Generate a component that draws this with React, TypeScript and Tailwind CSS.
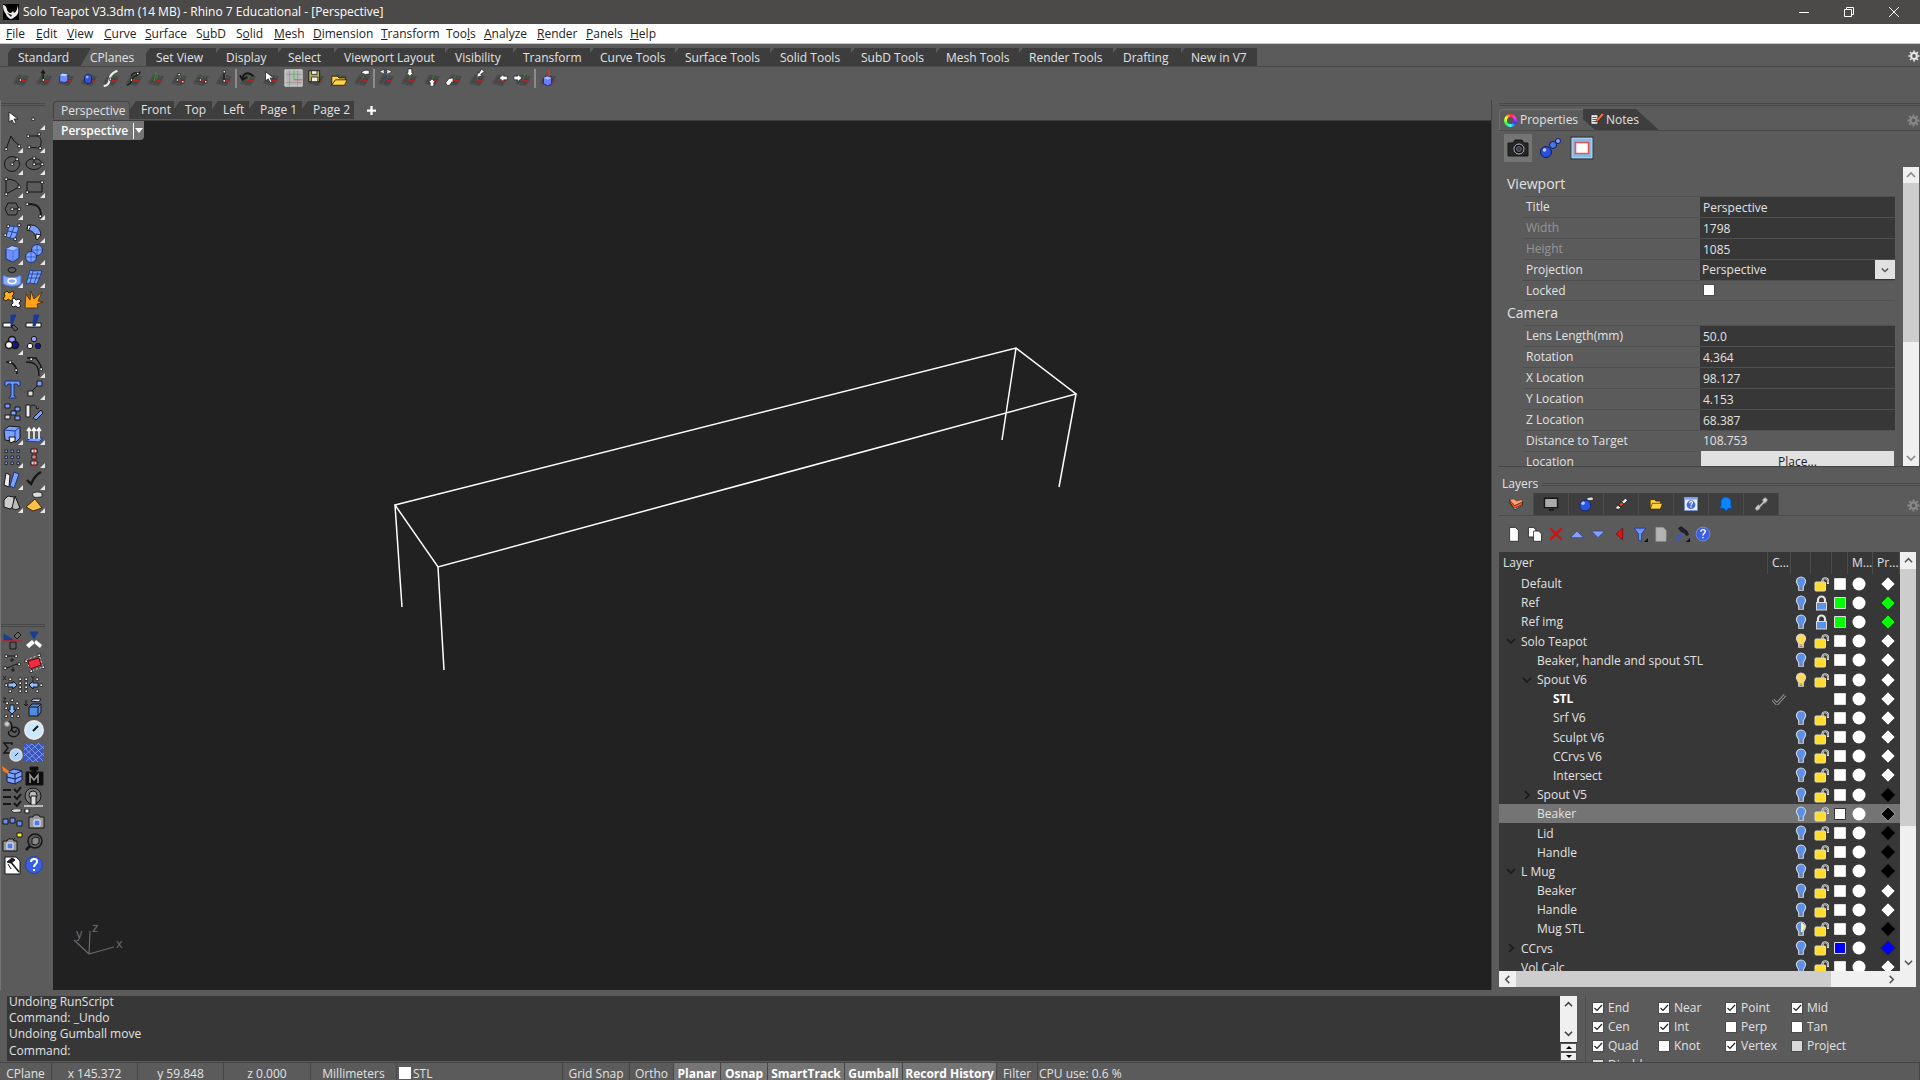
import React, { useState } from 'react'

type IconProps = { children: React.ReactNode; size?: string; box?: string }

function Icon({ children, size = 'size-[22px]', box = '0 0 22 22' }: IconProps) {
  return (
    <svg viewBox={box} className={`${size} shrink-0`} fill="none" stroke="#161616" aria-hidden="true">
      {children}
    </svg>
  )
}

// little square control points
function Pts({ at, fill = '#fff' }: { at: number[][]; fill?: string }) {
  return (
    <>
      {at.map(([x, y], i) => (
        <rect key={i} x={x - 1} y={y - 1} width="2.4" height="2.4" fill={fill} stroke="#111" strokeWidth=".7" />
      ))}
    </>
  )
}

// dim construction plane with the red x axis and green y axis
function Plane() {
  return (
    <>
      <path d="M2 17 8 7 20 9 14 20Z" fill="#4e4e4e" stroke="none" />
      <path d="M4 14 16 17M6 11 18 13M5 18 11 8M9 19 15 8M12 19 18 9" stroke="#404040" strokeWidth=".7" />
      <path d="M11 13 18 15" stroke="#d01818" strokeWidth="1.3" />
      <path d="M11 13 13 8" stroke="#2a8a2a" strokeWidth="1" />
    </>
  )
}

const Corner = () => <path d="M22 17v5h-5z" fill="#e6e6e6" stroke="none" />

function Chevron({ dir = 'down', className = 'size-[10px]' }: { dir?: 'up' | 'down' | 'left' | 'right'; className?: string }) {
  const d = { up: 'M1 7l4-4 4 4', down: 'M1 3l4 4 4-4', left: 'M7 1 3 5l4 4', right: 'M3 1l4 4-4 4' }[dir]
  return (
    <svg viewBox="0 0 10 10" className={className} fill="none" stroke="currentColor" strokeWidth="1.7" aria-hidden="true">
      <path d={d} />
    </svg>
  )
}

function Gear({ className }: { className: string }) {
  return (
    <svg viewBox="0 0 14 14" className={className} fill="none" stroke="currentColor" aria-hidden="true">
      <circle cx="7" cy="7" r="3.4" strokeWidth="2.4" />
      <path d="M7 .5v2M7 11.5v2M.5 7h2M11.5 7h2M2.4 2.4l1.4 1.4M10.2 10.2l1.4 1.4M2.4 11.6l1.4-1.4M10.2 3.8l1.4-1.4" strokeWidth="2" />
    </svg>
  )
}

const menus: [string, number, string][] = [
  ['File', 0, 'w-[30px]'], ['Edit', 0, 'w-[31px]'], ['View', 0, 'w-[37px]'], ['Curve', 0, 'w-[41px]'],
  ['Surface', 0, 'w-[51px]'], ['SubD', 1, 'w-[40px]'], ['Solid', 1, 'w-[38px]'], ['Mesh', 0, 'w-[39px]'],
  ['Dimension', 0, 'w-[68px]'], ['Transform', 0, 'w-[65px]'], ['Tools', 3, 'w-[38px]'], ['Analyze', 0, 'w-[53px]'],
  ['Render', 0, 'w-[49px]'], ['Panels', 0, 'w-[44px]'], ['Help', 0, 'w-[30px]'],
]

const toolTabs: [string, string][] = [
  ['Standard', 'w-[72px]'], ['CPlanes', 'w-[66px]'], ['Set View', 'w-[70px]'], ['Display', 'w-[62px]'],
  ['Select', 'w-[56px]'], ['Viewport Layout', 'w-[111px]'], ['Visibility', 'w-[68px]'], ['Transform', 'w-[77px]'],
  ['Curve Tools', 'w-[85px]'], ['Surface Tools', 'w-[95px]'], ['Solid Tools', 'w-[81px]'], ['SubD Tools', 'w-[85px]'],
  ['Mesh Tools', 'w-[83px]'], ['Render Tools', 'w-[94px]'], ['Drafting', 'w-[68px]'], ['New in V7', 'w-[76px]'],
]

const viewTabs: [string, string][] = [
  ['Perspective', 'w-[77px]'], ['Front', 'w-[44px]'], ['Top', 'w-[38px]'], ['Left', 'w-[37px]'],
  ['Page 1', 'w-[53px]'], ['Page 2', 'w-[52px]'],
]

type Tool = [string, React.ReactNode]

const cplaneTools: Tool[][] = [
  [
    ['Origin', <Pts at={[[10, 13]]} />],
    ['Elevation', <><path d="M10 13V3M8 6l2-3 2 3" strokeWidth="1.5" /><Pts at={[[10, 13]]} /></>],
    ['To object', <><path d="M4 8l3-2 6 1v7l-3 2-6-1z" fill="#6d8fff" stroke="#1a2a90" /><path d="M4 8l3-2 6 1-3 2z" fill="#c3d1ff" stroke="none" /></>],
    ['To surface', <><ellipse cx="10" cy="12" rx="4" ry="5" fill="#3454d8" stroke="#10206a" /><circle cx="9" cy="10" r="1.6" fill="#8fb2ff" stroke="none" /></>],
    ['To curve', <><path d="M3 20C11 19 8 12 11 8s5-4 7-5" stroke="#eee" strokeWidth="2.4" /><Pts at={[[10, 12]]} /></>],
    ['Perp to curve', <><path d="M3 19c6-1 5-7 8-9s5-2 7-6M8 9c2-5 6-4 7-2" strokeWidth="1.4" /><Pts at={[[8, 13], [15, 6]]} /></>],
    ['Rotate', <path d="M9 14 11 4" stroke="#1f9d1f" />],
    ['3 points', <Pts at={[[9, 13], [15, 15], [11, 7]]} />],
    ['By X axis', <Pts at={[[10, 13], [16, 15]]} />],
    ['By Z axis', <><path d="M11 14V4" strokeWidth="1.4" /><Pts at={[[11, 14], [11, 4]]} /></>],
  ],
  [
    ['Previous', <path d="M5 11C6 5 12 4 17 9M2 8l3 5 5-3" strokeWidth="2" />],
    ['Select', <path d="M5 4v10l3-2 2 4 2-1-2-4h4z" fill="#fff" strokeWidth=".8" />],
    ['Named grid', <><path d="M1 2h19v18H1z" fill="#b9b9b9" stroke="#ddd" /><path d="M6 3v17M15 3v17M2 7h18M2 16h18" stroke="#8a8a8a" strokeWidth=".7" /><path d="M11 3v10" stroke="#3c3" /><path d="M11 13h9" stroke="#e44" /></>],
    ['Save', <><path d="M3 3h12v12H3z" fill="#b4a956" /><path d="M6 3h6v4H6zM6 10h7v5H6z" fill="#eee" strokeWidth=".8" /></>],
    ['Read', <path d="M3 19V9h6l2 2h7v2M3 19l4-6h13l-3 6z" fill="#ffd34d" stroke="#332200" />],
    ['Properties', <path d="M10 5c3-3 7-3 9-2v4c-2-1-4 1-5 0z" fill="#fff" strokeWidth=".8" />],
  ],
  [
    ['To view', <><path d="M4 4c4-3 10-3 13 0-3 3-9 3-13 0z" fill="#fff" strokeWidth=".7" /><circle cx="10.500" cy="4" r="1.600" fill="#3262e8" /><path d="M11 8v10" stroke="#1f40a0" /></>],
    ['Top', <path d="M10 1h4v4h2l-4 4-4-4h2z" fill="#fff" strokeWidth=".7" />],
    ['Bottom', <path d="M9 20v-4H7l4-4 4 4h-2v4z" fill="#fff" strokeWidth=".7" />],
    ['Front', <path d="M3 19l-1-3 4-5 1 1 1-1h2v5l-1-1-3 4z" fill="#fff" strokeWidth=".7" />],
    ['Back', <path d="M16 1l3 3-4 3 2 1-5 2-1-1 1-5 1 2z" fill="#fff" strokeWidth=".7" />],
    ['Right', <path d="M10 11l5-4v2h4v4h-4v2z" fill="#fff" strokeWidth=".7" />],
    ['Left', <path d="M10 11l-5 4v-2H1V9h4V7z" fill="#fff" strokeWidth=".7" />],
  ],
  [['Gumball', <><path d="M12 2v8" stroke="#d33" strokeWidth="1.600" /><path d="M6 11l4-2 5 2v6l-4 3-5-3z" fill="#6a7dff" stroke="#1a2470" /><path d="M6 11l4-2 5 2-4 2z" fill="#aab6ff" stroke="none" /></>]],
]

const cplaneGroups = ['w-[225px] grid-cols-10', 'w-[136px] grid-cols-6', 'w-[159px] grid-cols-7', 'w-[24px] grid-cols-1']

const blue = '#7ba0ff'

const mainTools: Tool[] = [
  ['Select', <path d="M8 4v10l3-2 2 4 2-1-2-4h4z" fill="#fff" strokeWidth=".8" />],
  ['Point', <><Pts at={[[10, 11]]} /><Corner /></>],
  ['Polyline', <><path d="M5 18 10 5l3 5 6 5" /><Pts at={[[5, 18], [18, 15]]} /><Corner /></>],
  ['Curve', <><path d="M5 5h9c6 0 5 13 0 12L6 16" /><Pts at={[[5, 5], [16, 3], [6, 16], [17, 17]]} /><Corner /></>],
  ['Circle', <><circle cx="11" cy="11" r="7.500" /><path d="M11 11l5-5" /><Pts at={[[11, 11], [16, 6]]} /><Corner /></>],
  ['Ellipse', <><ellipse cx="11" cy="11" rx="8" ry="5.500" /><path d="M11 11V6M11 11h7" /><Pts at={[[11, 11], [11, 5], [19, 11]]} /><Corner /></>],
  ['Arc', <><path d="M5 3v15l13-7M5 3c9 0 13 4 13 8" /><Pts at={[[5, 3], [5, 18], [18, 11]]} /><Corner /></>],
  ['Rectangle', <><path d="M4 6h15v10H4z" /><Pts at={[[4, 16], [19, 6]]} /><Corner /></>],
  ['Polygon', <><path d="M4 11l3-6h8l3 6-3 6H7zM11 11h7" /><Pts at={[[11, 11], [18, 11]]} /><Corner /></>],
  ['Fillet curves', <><path d="M5 6c9 0 13 3 13 12" strokeWidth="1.800" /><Pts at={[[4, 6], [17, 18]]} /><Corner /></>],
  ['Surface from points', <><path d="M8 5l10 1-4 12-9-2z" fill={blue} stroke="#24469c" /><path d="M7 10l9 2M13 6 9 17" stroke="#24469c" /><Pts at={[[7, 5], [18, 4], [4, 14], [14, 18]]} /><Corner /></>],
  ['Sweep', <><path d="M5 4c8-1 12 4 13 9l-5 5c0-5-4-9-9-9z" fill={blue} /><path d="M5 4l3 1-3 5-1-1zM13 13l5 1-4 5-1-1z" fill="#fff" /><Corner /></>],
  ['Box', <><path d="M5 6l6-3 7 2v10l-6 4-7-3z" fill="#6d92ff" stroke="#17307a" /><path d="M5 6l6-3 7 2-6 3z" fill="#a9c3ff" stroke="none" /><path d="M5 6l7 2v11M12 8l6-3" stroke="#4468cc" strokeWidth=".8" /><Corner /></>],
  ['Sphere', <><circle cx="14" cy="7" r="5.500" fill={blue} stroke="#17307a" /><circle cx="8" cy="14" r="5.500" fill={blue} stroke="#17307a" /><path d="M8 9v11M3 14h10M14 2v10M9 7h10" stroke="#2b4fae" strokeWidth=".7" /><Corner /></>],
  ['Surface tools', <><ellipse cx="11" cy="4" rx="4" ry="2.500" /><path d="M2 9c6 3 12 3 18 0v9c-6 3-12 3-18 0z" fill="#8aaaff" stroke="#4468cc" /><ellipse cx="11" cy="15" rx="4" ry="2.500" stroke="#fff" strokeWidth="1.500" /><Corner /></>],
  ['Mesh', <><path d="M7 4c4 2 8 0 12 1l-5 13c-4 0-7-2-11 0z" fill={blue} stroke="#1d3d8b" /><path d="M5 12h12M10 5 7 17M15 6 11 18M6 8h12" stroke="#1d3d8b" strokeWidth=".8" /><Corner /></>],
  ['Boolean', <><path d="M3 5l3-2 2 2 4-2 1 3-2 2 2 3-3 2-3-2-2 2-3-2 2-3z" fill="#ffae1a" stroke="#352200" /><path d="M11 11l2-1 2 2 3-1 2 2-2 2 2 3-3 2-2-2-3 1-2-2 2-2z" fill="#fff" /></>],
  ['Explode', <path d="M2 20 3 6l4 6 1-9 3 8 8-7-4 9 5 1-6 2 1 4z" fill="#ffa21a" stroke="#4a2800" strokeWidth=".8" />],
  ['Trim', <><path d="M2 12h9v4H2z" fill="#fff" /><path d="M10 4h5l-5 11z" fill="#1b3899" stroke="#1b3899" /><path d="M13 14l4 4-3 2-4-5z" /></>],
  ['Split', <><path d="M3 12h15v4H3z" fill="#fff" /><path d="M11 4h5l-4 11h-2z" fill="#1b3899" stroke="#1b3899" /></>],
  ['Group', <><circle cx="11" cy="7" r="3.500" fill="#9a9aff" strokeWidth="1.500" /><circle cx="14" cy="12" r="3.500" fill="#16168a" strokeWidth="1.500" /><circle cx="8" cy="12" r="3.500" fill="#fff" strokeWidth="1.500" /><Corner /></>],
  ['Ungroup', <><circle cx="11" cy="6" r="2.700" fill="#9a9aff" /><circle cx="15" cy="13" r="2.700" fill="#16168a" /><circle cx="7" cy="13" r="2.700" fill="#fff" /></>],
  ['Edit points', <><path d="M5 6c7 0 11 3 11 12" strokeWidth="1.700" /><Pts at={[[9, 6], [15, 14]]} /></>],
  ['Control points', <><path d="M3 6c9 0 13 3 13 14M4 2h9l5 8v4" strokeWidth="1.400" /><Pts at={[[8, 3], [18, 13]]} /><Corner /></>],
  ['Text', <path d="M4 3h15v5h-2l-1-2h-3v12l2 1v1H8v-1l2-1V6H7L6 8H4z" fill="#6d98ff" stroke="#14307c" />],
  ['Move', <><path d="M7 15l8-8" /><path d="M5 13h5v5H5z" fill="#ddd" /><path d="M14 3h5v5h-5z" fill={blue} /><Corner /></>],
  ['Copy', <><path d="M4 3h5v4H4zM14 6h5v4h-5zM10 10h5v4h-5zM14 15h5v4h-5z" fill={blue} /><path d="M4 14h5v4H4z" fill="#ddd" /></>],
  ['Rotate', <><path d="M3 4h4v12H3z" fill="#eee" /><path d="M10 17l8-8 2 3-7 7z" fill={blue} /><path d="M8 5c4-2 5 0 6 3l2-1" /></>],
  ['Fillet edges', <><path d="M3 7l5-4 11 1v11l-4 4-11-2z" fill={blue} /><path d="M3 7l11 1v8M14 8l5-4" stroke="#1e3e90" /><path d="M8 14h6v4l-5 2z" fill="#eee" /><Corner /></>],
  ['Extrude', <><path d="M3 18l5-3h12l-4 4z" fill={blue} stroke="#1e3e90" /><path d="M6 16V5M11 16V5M16 16V5M4 8l2-3 2 3M9 8l2-3 2 3M14 8l2-3 2 3" stroke="#fff" strokeWidth="1.500" /><Corner /></>],
  ['Array', <><Pts fill={blue} at={[[5, 5], [11, 5], [17, 5], [5, 11], [11, 11], [17, 11], [5, 17], [11, 17], [17, 17]]} /><Corner /></>],
  ['Align', <><path d="M8 3h6v4H8zM9 9h4v4H9zM8 15h6v4H8z" fill="#ddd" /><path d="M11 1v20" stroke="#e11" /><Corner /></>],
  ['Drape', <><path d="M5 5l4 2-1 12-5-2z" fill="#eee" /><path d="M13 4l5 2-5 14-4-2z" fill={blue} stroke="#16347c" /><Corner /></>],
  ['Check', <><path d="M4 12l4 4C11 9 14 6 18 4" strokeWidth="2.400" /><Corner /></>],
  ['Solids', <><path d="M3 9l4-4 6 1v9l-4 3-6-2z" fill="#ccc" /><path d="M14 5l5 12c-3 2-6 2-8 0z" fill="#bbb" /><Corner /></>],
  ['Render', <><path d="M12 8l7 9-9 3-7-4z" fill="#ffc04a" stroke="#412800" /><path d="M9 3c4-3 7-2 10-1v4c-4 0-6 1-8 0z" fill="#ddd" strokeWidth=".8" /><Corner /></>],
]

const extraTools: Tool[] = [
  ['Section', <><path d="M3 5l9 6H3z" fill="#17418f" stroke="#17418f" /><path d="M13 7l4-4 3 3-4 4z" fill="#666" /><path d="M9 13h6v7H9z" /><path d="M1 12h20" stroke="#e11" /></>],
  ['Clip', <><path d="M7 3h8l-4 7z" fill="#17418f" stroke="#17418f" /><path d="M9 11l3 3-6 5-3-3zM13 11l-2 3 6 5 2-3z" fill="#fff" stroke="none" /></>],
  ['Match', <><path d="M5 4h10M5 16c6-1 7-4 13-4M11 6v4M12 15v5M9 8h4M10 18h4" /><Pts at={[[5, 4], [15, 4], [4, 16], [18, 12]]} /></>],
  ['Cage', <><path d="M5 9l11-3 2 7-11 4z" fill="#ee2c44" stroke="#600" /><path d="M3 8l13-5 4 12L8 19z" stroke="#ccc" strokeDasharray="2 2" /><Pts at={[[3, 9], [16, 3], [20, 15], [8, 19]]} /></>],
  ['Set X', <><path d="M2 2l3 4M5 2 2 6" strokeWidth=".8" /><path d="M7 9h5V7l4 4-4 4v-2H7z" fill="#8fbcff" /><Pts at={[[9, 5], [5, 11], [9, 17], [19, 5], [19, 9], [19, 13], [19, 17]]} /></>],
  ['Set Y', <><path d="M8 2l2 2 2-2M10 4v3" strokeWidth=".8" /><path d="M15 9h-5V7l-4 4 4 4v-2h5z" fill="#8fbcff" /><Pts at={[[3, 5], [3, 9], [3, 13], [3, 17], [14, 5], [18, 11], [14, 17]]} /></>],
  ['Set Z', <><path d="M2 1h3L2 5h3" strokeWidth=".8" /><path d="M9 8h4v5h2l-4 4-4-4h2z" fill="#8fbcff" /><Pts at={[[11, 3], [6, 6], [16, 6], [5, 11], [17, 11], [5, 19], [11, 19], [17, 19]]} /></>],
  ['Extract', <><path d="M6 10l3-3h9v8l-3 4H6z" fill="#4f8ae0" /><path d="M6 10h9v9M15 10l3-3" /><path d="M8 4l2-2h8l-2 3z" fill="#bfe0ff" /><path d="M3 3v6M1 7l2 2 2-2" /></>],
  ['Soft edit', <><path d="M5 4c7-5 7 8 4 8M8 12c-3 6 8 8 10 2 2-6-8-8-7-3 1 3 5 3 4 0" strokeWidth="1.500" /><circle cx="6" cy="5" r="2.500" fill="#ccc" stroke="#888" /></>],
  ['Analyze', <><circle cx="11" cy="11" r="9" fill="#cbe8ff" stroke="#e9e9e9" strokeWidth="2" /><path d="M10 12l5-5" strokeWidth="2" /></>],
  ['Sum', <><path d="M11 4V2H3l4 5-4 5h8v-2" strokeWidth="1.500" /><circle cx="15" cy="14" r="6" fill="#a9d4ff" stroke="#ddd" strokeWidth="1.500" /><path d="M14 15l3-3" /></>],
  ['Mesh surface', <><path d="M1 2c7 3 14-2 20 1v18H1z" fill="#3a55bd" stroke="none" /><path d="M1 6l14 15M1 12l9 9M3 3l17 17M9 3l12 12M15 2l6 6M1 9l8-6M1 15 16 2M3 20 21 5M10 21l11-9" stroke="#8aa2f4" strokeWidth=".8" /></>],
  ['Bake', <><path d="M6 8l7-3 8 2v9l-7 4-8-2z" fill="#7ba0ff" stroke="#102050" /><path d="M6 8l8 2v10M14 10l7-3M6 13l8 2M14 15l7-3" stroke="#102050" /><path d="M1 2l7 5-1 3-5-3z" fill="#ff7a1a" stroke="none" /></>],
  ['Mass', <><path d="M3 8h17v13H3zM7 3h8v3h-2v2H9V6H7z" fill="#0c0c0c" /><path d="M7 19v-8l4 5 4-5v8" stroke="#999" strokeWidth="1.500" /></>],
  ['Checklist', <path d="M2 4h8M2 11h8M2 18h8M13 3l3 3 4-5M13 10l3 3 4-5M13 17l3 3 4-5" strokeWidth="2" />],
  ['Turntable', <><circle cx="10" cy="10" r="8" fill="#777" /><circle cx="10" cy="9" r="4" fill="#bbb" /><path d="M8 10h5v9H8z" fill="#ddd" /><path d="M1 20h19" stroke="#ddd" strokeWidth="1.500" /></>],
  ['Sequence', <><path d="M2 10h5v5H2zM9 9h5v5H9zM16 12h5v5h-5z" fill="#6a8df5" /><path d="M10 1c4-2 7-1 10-1v3c-4 0-6 1-8 0z" fill="#ddd" strokeWidth=".8" /></>],
  ['Snapshot', <><path d="M6 8h4l1-2h5l1 2h4v11H6z" fill="#999" /><path d="M11 11h6v6h-6z" fill="#4e7cf0" stroke="#eee" /><path d="M2 0h4v4H2z" fill="#fff" /></>],
  ['Capture', <><path d="M2 10h4l1-2h5l1 2h3v10H2z" fill="#999" /><path d="M6 12h6v6H6z" fill="#4e7cf0" stroke="#eee" /><path d="M16 2h5v4h-5z" fill="#ffec1a" /><path d="M14 7l-2 2" /></>],
  ['Inspect', <><circle cx="12" cy="10" r="7" strokeWidth="1.500" /><path d="M7 15l-4 4" strokeWidth="2.500" /><path d="M9 8l3-2 4 1v5l-3 2-4-1z" fill="#888" /></>],
  ['Options', <><path d="M4 3h11l4 4v13H4z" fill="#fff" /><path d="M6 8l5-4 3 2-4 3z" fill="#222" /><path d="M9 7l9 11" strokeWidth="1.500" /><path d="M7 10l3 5" /></>],
  ['Help', <><circle cx="11" cy="11" r="8.500" fill="#3b5fe0" stroke="#2444a8" /><path d="M8 8c0-4 7-4 6 0 0 2-3 2-3 5M11 15v2" stroke="#fff" strokeWidth="2" /></>],
]

type Layer = {
  name: string
  depth: 0 | 1 | 2
  open?: boolean
  bulb?: 'off' | 'on' | 'half' | 'none'
  locked?: boolean
  color?: string
  print?: string
  current?: boolean
}

const layers: Layer[] = [
  { name: 'Default', depth: 0 },
  { name: 'Ref', depth: 0, locked: true, color: '#00ff00', print: '#00ff00' },
  { name: 'Ref img', depth: 0, locked: true, color: '#00ff00', print: '#00ff00' },
  { name: 'Solo Teapot', depth: 0, open: true, bulb: 'on' },
  { name: 'Beaker, handle and spout STL', depth: 1 },
  { name: 'Spout V6', depth: 1, open: true, bulb: 'on' },
  { name: 'STL', depth: 2, bulb: 'none', current: true },
  { name: 'Srf V6', depth: 2 },
  { name: 'Sculpt V6', depth: 2 },
  { name: 'CCrvs V6', depth: 2 },
  { name: 'Intersect', depth: 2 },
  { name: 'Spout V5', depth: 1, open: false, print: '#000' },
  { name: 'Beaker', depth: 1, print: '#000' },
  { name: 'Lid', depth: 1, print: '#000' },
  { name: 'Handle', depth: 1, print: '#000' },
  { name: 'L Mug', depth: 0, open: true, print: '#000' },
  { name: 'Beaker', depth: 1 },
  { name: 'Handle', depth: 1 },
  { name: 'Mug STL', depth: 1, bulb: 'half', print: '#000' },
  { name: 'CCrvs', depth: 0, open: false, color: '#0000ff', print: '#0000ff' },
  { name: 'Vol Calc', depth: 0 },
]

const indents = ['pl-1', 'pl-5', 'pl-9']

function Bulb({ kind }: { kind: 'off' | 'on' | 'half' }) {
  const fill = kind === 'on' ? '#ffd95c' : '#5b8fe8'
  return (
    <svg viewBox="0 0 12 16" className="mx-auto h-4 w-3" aria-hidden="true">
      <path d="M6 1a4.600 4.600 0 0 0-4.600 4.600c0 2.400 2 3.400 2.300 5.400v3.300h4.600V11c.3-2 2.300-3 2.300-5.400A4.600 4.600 0 0 0 6 1z" fill={fill} stroke="#d8d8d8" strokeWidth="1.100" />
      {kind === 'half' && <path d="M6 2v9h1.500c.5-2 2.400-3 2.400-5.400C9.900 3.500 8 2 6 2z" fill="#fff0a8" />}
      <path d="M4.500 12h3M4.500 13.500h3" stroke="#777" strokeWidth=".8" />
    </svg>
  )
}

function Lock({ locked }: { locked?: boolean }) {
  return (
    <svg viewBox="0 0 15 16" className="mx-auto h-4 w-[15px]" fill="none" aria-hidden="true">
      {locked ? (
        <>
          <path d="M4 8V5a3.500 3.500 0 0 1 7 0v3" stroke="#e4e4e4" strokeWidth="2.200" />
          <rect x="2.500" y="7.500" width="10" height="7.500" fill="#5b93ea" stroke="#d8d8d8" />
        </>
      ) : (
        <>
          <path d="M8.500 7V4.500a2.800 2.800 0 0 1 5.500 0V8" stroke="#e0e0e0" strokeWidth="2.200" />
          <path d="M8.500 6V4.500a2.800 2.800 0 0 1 5.500 0V7" stroke="#666" strokeWidth=".7" />
          <rect x="1" y="6" width="10.500" height="9" rx="1" fill="#ffdc2e" stroke="#e6dfc0" />
        </>
      )}
    </svg>
  )
}

function Check({ id, label, defaultChecked, disabled, labelled }: { id: string; label: string; defaultChecked?: boolean; disabled?: boolean; labelled?: boolean }) {
  return (
    <div className="flex h-[18px] items-center gap-1">
      <span className="relative flex size-[12px]">
        <input id={id} type="checkbox" aria-label={labelled ? undefined : label} defaultChecked={defaultChecked} disabled={disabled} className="peer size-3 appearance-none border border-[#4a4a4a] bg-white disabled:bg-[#d8d8d8]" />
        <svg viewBox="0 0 12 12" className="pointer-events-none absolute inset-0 hidden size-3 peer-checked:block" fill="none" stroke="#222" strokeWidth="1.200" aria-hidden="true">
          <path d="M2.500 6 5 8.500l5-5.500" />
        </svg>
      </span>
      {labelled && <label htmlFor={id}>{label}</label>}
    </div>
  )
}

function TitleBar() {
  return (
    <header className="flex h-6 shrink-0 items-center bg-[#4c4a48] text-white">
      <svg viewBox="0 0 16 16" className="ml-[3px] size-4" aria-hidden="true">
        <path d="M0 0h16v16H0z" fill="#000" />
        <path d="M0 1c2 0 4 2 4 5 1 2 2 3 4 3l2-2 1 2c2-1 4-4 3-8 2 4 2 9-1 11-2 1-3 3-6 3-2-2-4-3-4-5C1 8 0 5 0 1z" fill="#eee" />
        <path d="M4 9l4 4 1-2z" fill="#222" />
      </svg>
      <h1 className="ml-1 flex-1">Solo Teapot V3.3dm (14 MB) - Rhino 7 Educational - [Perspective]</h1>
      <div className="flex">
        <button aria-label="Minimize" className="flex h-6 w-[45px] items-center justify-center">
          <svg viewBox="0 0 10 10" className="size-[10px]" stroke="#fff"><path d="M0 5.500h10" /></svg>
        </button>
        <button aria-label="Restore" className="flex h-6 w-[45px] items-center justify-center">
          <svg viewBox="0 0 10 10" className="size-[10px]" stroke="#fff" fill="none"><path d="M.5 2.500h7v7h-7zM2.500 2.500v-2h7v7h-2" /></svg>
        </button>
        <button aria-label="Close" className="flex h-6 w-[46px] items-center justify-center">
          <svg viewBox="0 0 10 10" className="size-[10px]" stroke="#fff"><path d="M0 0l10 10M10 0 0 10" /></svg>
        </button>
      </div>
      <span className="w-[3px]" />
    </header>
  )
}

function ToolTabs() {
  const [active, setActive] = useState('CPlanes')
  return (
    <div className="flex h-[23px] shrink-0 items-end border-b border-[#4a4a4a] pl-2">
      {toolTabs.map(([name, width]) => (
        <button
          key={name}
          onClick={() => setActive(name)}
          className={`${width} h-[18px] pl-[10px] text-left leading-5 whitespace-nowrap ${
            name === active
              ? 'bg-[linear-gradient(120deg,#3d3d3d_9px,#5b5b5b_10px)]'
              : 'bg-[#3d3d3d] [clip-path:polygon(0_100%,0_5px,4px_0,100%_0,100%_100%)]'
          }`}
        >
          {name}
        </button>
      ))}
      <span className="flex-1" />
      <button aria-label="Toolbar options" className="mb-1 text-[#e8e8e8]"><Gear className="size-3" /></button>
    </div>
  )
}

function CPlaneBar() {
  return (
    <div className="flex h-[33px] shrink-0 items-start pl-[10px]">
      {cplaneTools.map((group, g) => (
        <div key={g} className="flex items-start">
          {g > 0 && <span className="mt-0.5 h-[19px] w-0.5 bg-[#8c8c8c]" />}
          <div className={`grid justify-items-center pt-px ${cplaneGroups[g]}`}>
            {group.map(([name, art]) => (
              <button key={name} aria-label={name}>
                <Icon size="size-5"><Plane />{art}</Icon>
              </button>
            ))}
          </div>
        </div>
      ))}
    </div>
  )
}

function SideTools() {
  return (
    <aside className="flex w-[53px] shrink-0 flex-col border-l border-[#777] pt-[3px] pr-2">
      <hr className="h-[3px] border-y border-[#484848]" />
      <div className="mt-[2px] grid h-[405px] shrink-0 auto-rows-fr grid-cols-2 place-items-center">
        {mainTools.map(([name, art]) => (
          <button key={name} aria-label={name} className="flex items-center"><Icon>{art}</Icon></button>
        ))}
      </div>
      <hr className="mt-[111px] h-[3px] border-y border-[#484848]" />
      <div className="mt-[2px] grid h-[247px] shrink-0 auto-rows-fr grid-cols-2 place-items-center">
        {extraTools.map(([name, art]) => (
          <button key={name} aria-label={name} className="flex items-center"><Icon>{art}</Icon></button>
        ))}
      </div>
    </aside>
  )
}

function Viewport() {
  const [active, setActive] = useState('Perspective')
  return (
    <main className="flex min-w-0 flex-1 flex-col">
      <div className="flex h-[21px] shrink-0 items-start border-b border-[#3c3c3c] pt-px">
        {viewTabs.map(([name, width]) => (
          <button
            key={name}
            onClick={() => setActive(name)}
            className={`${width} h-[18px] text-left leading-[18px] whitespace-nowrap ${
              name === active
                ? 'rounded-t border border-b-0 border-[#444] bg-[#5e5e5e] pl-[7px] leading-4'
                : 'bg-[#3e3e3e] pl-[11px] [clip-path:polygon(0_100%,0_8px,6px_0,100%_0,100%_100%)]'
            }`}
          >
            {name}
          </button>
        ))}
        <button aria-label="New viewport" className="ml-[13px] flex h-[18px] items-center">
          <svg viewBox="0 0 10 10" className="size-[9px]" stroke="#fff" strokeWidth="2.500"><path d="M5 0v10M0 5h10" /></svg>
        </button>
      </div>
      <section className="relative flex-1 overflow-hidden bg-[#212121]">
        <svg viewBox="0 0 1438 869" className="absolute inset-0 size-full" fill="none" stroke="#fff" strokeWidth="1.500" aria-label="Wireframe">
          <path d="M342 384 963 227 1023 273 385 446ZM342 384l7 102M385 446l6 103M963 227l-14 92M1023 273l-17 93" />
          <g stroke="#6a6a6a" strokeWidth="1.200">
            <path d="M36 833 21 819M36 833l1-23M36 833l25-7" />
          </g>
          <g fill="#6a6a6a" stroke="none" fontFamily="Liberation Sans" fontSize="13">
            <text x="23" y="817">y</text>
            <text x="39" y="811">z</text>
            <text x="63" y="827">x</text>
          </g>
        </svg>
        <div className="absolute top-0 left-0 flex h-[19px] items-center rounded-br bg-[#757575] font-semibold text-white">
          <span className="w-20 pl-2">Perspective</span>
          <button aria-label="Viewport menu" className="flex h-4 w-[11px] items-center justify-center border-l border-white">
            <svg viewBox="0 0 8 5" className="w-2" fill="#fff"><path d="M0 0h8L4 5z" /></svg>
          </button>
        </div>
      </section>
    </main>
  )
}

const viewportFields: [string, string, boolean?][] = [['Title', 'Perspective'], ['Width', '1798', true], ['Height', '1085', true]]
const cameraFields: [string, string][] = [
  ['Lens Length(mm)', '50.0'], ['Rotation', '4.364'], ['X Location', '98.127'], ['Y Location', '4.153'], ['Z Location', '68.387'],
]

function Field({ label, value, dim }: { label: string; value: string; dim?: boolean }) {
  const id = label.replace(/\W/g, '')
  return (
    <>
      <label htmlFor={id} className={`border-t border-[#505050] pl-[3px] leading-5 ${dim ? 'text-[#959595]' : ''}`}>{label}</label>
      <input id={id} defaultValue={value} readOnly={dim} className="h-[21px] w-full min-w-0 border-t border-[#505050] bg-[#373737] px-[3px]" />
    </>
  )
}

function Properties() {
  return (
    <section className="flex h-[358px] shrink-0 flex-col border-b border-[#444]">
      <div className="flex h-[22px] shrink-0 border-b border-[#4a4a4a]">
        <button className="flex w-[84px] items-center rounded-tl border-t border-l border-[#707070] pl-1">
          <span className="mr-[3px] size-[13px] rounded-full bg-[conic-gradient(#f33,#f3f,#33f,#3ff,#3f3,#ff3,#f33)] p-[3px]"><span className="block size-full rounded-full bg-[#555]" /></span>
          Properties
        </button>
        <button className="flex w-[76px] items-center bg-[#3e3e3e] pl-[6px] [clip-path:polygon(0_0,53px_0,100%_100%,12px_100%,0_10px)]">
          <Icon size="size-[15px]"><path d="M3 4h10v14H3z" fill="#eee" /><path d="M5 8h6M5 11h6M5 14h6" /><path d="M19 1l3 3-8 9-4 2 1-4z" fill="#ff6a2a" strokeWidth=".7" /></Icon>
          <span className="ml-0.5">Notes</span>
        </button>
        <span className="flex-1" />
        <button aria-label="Panel options" className="pt-0.5 text-[#8a8a8a]"><Gear className="size-[13px]" /></button>
      </div>
      <div className="flex h-9 shrink-0 gap-1 pt-[3px] pl-[5px]">
        <button aria-label="Camera" className="flex size-7 items-center justify-center bg-[#757575]">
          <Icon><path d="M1 6h5l2-3h7l2 3h4v13H1z" fill="#262626" /><circle cx="12" cy="12" r="5" fill="#111" stroke="#bbb" /><circle cx="12" cy="12" r="2.500" fill="#33463d" stroke="#668" /></Icon>
        </button>
        <button aria-label="Material" className="flex size-7 items-center justify-center">
          <Icon><circle cx="7" cy="15" r="5.500" fill="#2a50d8" stroke="#0d1d60" /><circle cx="14" cy="8" r="3.500" fill="#4a77ec" stroke="#0d1d60" /><circle cx="19" cy="4" r="2.500" fill="#7ba4ff" stroke="#0d1d60" /><circle cx="5.500" cy="13" r="1.800" fill="#bcd0ff" stroke="none" /></Icon>
        </button>
        <button aria-label="Display mode" className="flex size-7 items-center justify-center">
          <Icon size="size-6"><path d="M1 1h20v20H1z" fill="#7cc0e8" stroke="#333" /><path d="M2 2h18v18H2z" stroke="#bce" /><path d="M5 6h12v10H5z" fill="#fff" stroke="#f05050" strokeWidth="1.500" /></Icon>
        </button>
      </div>
      <div className="flex min-h-0 flex-1">
        <div className="min-w-0 flex-1 overflow-hidden pr-2 pl-2">
          <h2 className="flex h-[29px] items-center pt-1 text-[14px]">Viewport</h2>
          <div className="ml-4 grid grid-cols-[1fr_195px]">
            {viewportFields.map(([label, value, dim]) => <Field key={label} label={label} value={value} dim={dim} />)}
            <label htmlFor="projection" className="border-t border-[#505050] pl-[3px] leading-5">Projection</label>
            <div className="relative">
              <select id="projection" defaultValue="Perspective" className="h-[21px] w-full appearance-none border-t border-[#505050] bg-[#373737] px-[2px]">
                <option>Perspective</option>
                <option>Parallel</option>
              </select>
              <span className="pointer-events-none absolute top-px right-0 flex h-[19px] w-5 items-center justify-center bg-[#e1e1e1] text-[#555]"><Chevron className="size-2" /></span>
            </div>
            <label htmlFor="locked" className="h-[21px] border-y border-[#505050] pl-[3px] leading-5">Locked</label>
            <div className="border-y border-[#505050] pl-[3px]"><Check id="locked" label="Locked" /></div>
          </div>
          <h2 className="flex h-6 items-center text-[14px]">Camera</h2>
          <div className="ml-4 grid grid-cols-[1fr_195px]">
            {cameraFields.map(([label, value]) => <Field key={label} label={label} value={value} />)}
            <span className="h-[21px] border-t border-[#505050] pl-[3px] leading-5">Distance to Target</span>
            <output className="border-t border-[#505050] pl-[3px] leading-5">108.753</output>
            <span className="border-t border-[#505050] pl-[3px] leading-5">Location</span>
            <button className="mx-px h-[21px] bg-[#e1e1e1] leading-5 text-[#222]">Place...</button>
          </div>
        </div>
        <div className="mr-px flex w-4 flex-col items-center bg-[#f0f0f0] text-[#8a8a8a]">
          <Chevron dir="up" className="my-[3px] size-[10px]" />
          <span className="h-[159px] w-full bg-[#cdcdcd]" />
          <span className="flex-1" />
          <Chevron className="my-[3px] size-[10px]" />
        </div>
      </div>
    </section>
  )
}

const layerTabs: Tool[] = [
  ['Layers', <><path d="M3 10l6 9 11-6v-4L9 14z" fill="#fff" /><path d="M2 5l7 8 11-5v4L9 17 3 10z" fill="#f05a28" /><path d="M2 5l6-1 4 3 7-2 1 3-11 5z" fill="#ffa277" stroke="#7a2408" strokeWidth=".7" /></>],
  ['Display', <><path d="M2 3h18v13H2z" fill="#aaa" strokeWidth="2" /><path d="M8 19h7" strokeWidth="2.500" /></>],
  ['Rendering', <><circle cx="10" cy="13" r="7.500" fill="#2a55e0" stroke="#0b1c66" /><circle cx="7" cy="10" r="2.500" fill="#a9c6ff" stroke="none" /><path d="M11 4c4-3 7-3 10-2v4c-4 0-5 1-7 0z" fill="#ddd" /></>],
  ['Materials', <><path d="M4 18c-1-3 2-4 3-5l4 3c-2 2-4 2-7 2z" fill="#fff" /><path d="M8 12l4-4 3 3-4 4z" fill="#e8491f" /><path d="M12 8l5-5 3 3-5 5z" fill="#eee" /></>],
  ['Libraries', <path d="M3 18V5h6l2 2h6v3M3 18l3-8h14l-3 8z" fill="#ffd23e" stroke="#3a2a00" />],
  ['Help', <><path d="M2 2h18v18H2z" fill="#e8eeff" stroke="#6d89e0" /><path d="M2 2h18v3H2z" fill="#86a4f4" stroke="none" /><circle cx="11" cy="12" r="6" fill="#4668d8" stroke="none" /><path d="M9 10c0-3 5-3 4 0 0 1-2 1-2 3M11 14v2" stroke="#fff" strokeWidth="1.500" /></>],
  ['Notifications', <path d="M2 17l2-3V9c0-10 14-10 14 0v5l2 3h-6l-3 4-3-4z" fill="#0a84ff" stroke="#0648a0" />],
  ['Tools', <path d="M3 17l4-5 2 1 5-5-1-3 4-3 3 3-2 4-3 1-5 5-1 3-4 2z" fill="#ccc" stroke="#888" />],
]

const layerTools: Tool[] = [
  ['New layer', <path d="M5 2h8l4 4v15H5z" fill="#fff" />],
  ['New sublayer', <><path d="M2 2h7l3 3v10H2z" fill="#fff" /><path d="M9 7h7l4 4v10H9z" fill="#fff" /></>],
  ['Delete', <path d="M3 3l16 16M19 3 3 19" stroke="#d40f0f" strokeWidth="3" />],
  ['Move up', <path d="M2 16 11 7l9 9z" fill="#86a0ff" stroke="#2b3f9e" />],
  ['Move down', <path d="M2 7l9 9 9-9z" fill="#86a0ff" stroke="#2b3f9e" />],
  ['Unnest', <path d="M16 3v16l-9-8z" fill="#e01414" stroke="#700" />],
  ['Filter', <><path d="M3 3h16l-6 8v10l-4-2v-8z" fill="#6b93ff" stroke="#1c3684" /><path d="M22 17v5h-5z" fill="#111" /></>],
  ['Page', <path d="M4 2h10l4 4v15H4z" fill="#b4b4b4" stroke="#999" />],
  ['Layer tools', <><path d="M3 20 12 9" stroke="#3a56c8" strokeWidth="3" /><path d="M6 3l4-2 8 6 2 5-3 1-3-4-4-1z" fill="#222" /><path d="M22 17v5h-5z" fill="#111" /></>],
  ['Help', <><circle cx="11" cy="11" r="9.500" fill="#3b5fe0" stroke="#7c98f4" /><path d="M8 8c0-4 7-4 6 0 0 2-3 2-3 5M11 15v2" stroke="#fff" strokeWidth="2" /></>],
]

function Layers() {
  const [selected, setSelected] = useState(12)
  return (
    <section className="flex min-h-0 flex-1 flex-col pt-[9px]">
      <div className="flex h-4 items-center gap-1 pl-[3px] leading-4">
        <h2>Layers</h2>
        <span className="h-[3px] flex-1 border-y border-[#4a4a4a]" />
      </div>
      <div className="flex h-6 shrink-0 items-end border-b border-[#4a4a4a]">
        {layerTabs.map(([name, art], i) => (
          <button key={name} aria-label={name} className={`flex h-[22px] w-[35px] items-center justify-center border-r border-[#4c4c4c] ${i ? 'bg-[#3e3e3e]' : ''}`}>
            <Icon size="size-4">{art}</Icon>
          </button>
        ))}
        <span className="flex-1" />
        <button aria-label="Panel options" className="pb-[3px] text-[#8a8a8a]"><Gear className="size-[13px]" /></button>
      </div>
      <div className="flex h-9 shrink-0 items-center gap-[5px] pl-[7px]">
        {layerTools.map(([name, art]) => (
          <button key={name} aria-label={name}><Icon size="size-4">{art}</Icon></button>
        ))}
      </div>
      <div className="mr-1 flex min-h-0 flex-1">
        <div className="min-w-0 flex-1 overflow-hidden bg-[#373737]">
          <table className="h-[425px] w-full table-fixed border-collapse">
            <colgroup>
              <col />
              <col className="w-[23px]" /><col className="w-5" /><col className="w-[21px]" />
              <col className="w-4" /><col className="w-[25px]" /><col className="w-[27px]" />
            </colgroup>
            <thead>
              <tr className="h-[22px] text-left *:border-r *:border-[#4c4c4c] *:p-0 *:font-normal *:whitespace-nowrap">
                <th className="pl-1!">Layer</th>
                <th className="pl-1!">C...</th>
                <th aria-label="On" /><th aria-label="Lock" /><th aria-label="Color" />
                <th className="pl-1!">M...</th>
                <th className="pl-1!">Pr...</th>
              </tr>
            </thead>
            <tbody>
              {layers.map((l, i) => (
                <tr key={i} onClick={() => setSelected(i)} className={`h-[19px] leading-[19px] *:p-0 ${i === selected ? 'bg-[#747474]' : ''}`}>
                  <td>
                    <span className={`flex items-center ${indents[l.depth]}`}>
                      <span className="flex w-[18px] items-center pl-[3px] text-[#1a1a1a]">
                        {l.open !== undefined && <Chevron dir={l.open ? 'down' : 'right'} />}
                      </span>
                      <span className={l.current ? 'font-bold text-white' : ''}>{l.name}</span>
                    </span>
                  </td>
                  <td>
                    {l.current && (
                      <svg viewBox="0 0 16 12" className="mx-auto w-4" fill="none" aria-label="Current">
                        <path d="M2 7l4 4L14 2" stroke="#b0b0b0" strokeWidth="3" />
                        <path d="M2 7l4 4L14 2" stroke="#333" strokeWidth="1.500" />
                      </svg>
                    )}
                  </td>
                  <td>{l.bulb !== 'none' && <Bulb kind={l.bulb ?? 'off'} />}</td>
                  <td>{l.bulb !== 'none' && <Lock locked={l.locked} />}</td>
                  <td>
                    <svg viewBox="0 0 12 12" className="mx-auto size-3"><path d="M.5.5h11v11H.5z" fill={l.color ?? '#fff'} stroke={i === selected ? '#333' : '#ddd'} /></svg>
                  </td>
                  <td>
                    <svg viewBox="0 0 14 14" className="ml-1 size-[14px]"><circle cx="7" cy="7" r="6.500" fill="#fff" /></svg>
                  </td>
                  <td>
                    <svg viewBox="0 0 16 16" className="ml-[7px] size-4"><path d="M8 .8 15.200 8 8 15.200.8 8z" fill={l.print ?? '#fff'} stroke={i === selected ? '#bbb' : '#222'} strokeWidth=".8" /></svg>
                  </td>
                </tr>
              ))}
            </tbody>
          </table>
        </div>
        <div className="flex w-4 flex-col items-center bg-[#f0f0f0] text-[#555]">
          <Chevron dir="up" className="my-[4px] size-[9px]" />
          <span className="h-[257px] w-full bg-[#cdcdcd]" />
          <span className="flex-1" />
          <Chevron className="my-[4px] size-[9px]" />
        </div>
      </div>
      <div className="mr-1 flex h-4 shrink-0 items-center bg-[#f0f0f0] text-[#555]">
        <Chevron dir="left" className="mx-[4px] size-[9px]" />
        <span className="h-full w-[315px] bg-[#cdcdcd]" />
        <span className="flex-1" />
        <Chevron dir="right" className="mr-[20px] size-[9px]" />
      </div>
    </section>
  )
}

const osnaps: [string, boolean, boolean?][] = [
  ['End', true], ['Near', true], ['Point', true], ['Mid', true],
  ['Cen', true], ['Int', true], ['Perp', false], ['Tan', false],
  ['Quad', true], ['Knot', false], ['Vertex', true], ['Project', false, true],
  ['Disable', false, true],
]

function CommandArea() {
  return (
    <div className="flex h-[73px] shrink-0 border-b border-[#444] pt-[6px] pl-[7px]">
      <div className="flex h-[65px] flex-1 bg-[#373737] font-medium">
        <div className="flex flex-1 flex-col pl-0.5 *:leading-4">
          <p className="-mt-0.5">Undoing RunScript</p>
          <p>Command: _Undo</p>
          <p>Undoing Gumball move</p>
          <div className="flex gap-1">
            <label htmlFor="command" className="leading-[17px]">Command:</label>
            <input id="command" className="flex-1 bg-transparent outline-none" />
          </div>
        </div>
        <div className="flex w-[17px] flex-col text-[#444]">
          <div className="flex h-[46px] flex-col items-center justify-between bg-[#f0f0f0] py-1">
            <Chevron dir="up" className="size-[9px]" />
            <Chevron className="size-[9px]" />
          </div>
          <button aria-label="Previous lines" className="mt-px flex h-[9px] items-center justify-center border border-[#555] bg-[#eee]"><svg viewBox="0 0 6 3" className="w-[6px]"><path d="M0 3h6L3 0z" /></svg></button>
          <button aria-label="Next lines" className="flex h-[9px] items-center justify-center border border-[#555] bg-[#eee]"><svg viewBox="0 0 6 3" className="w-[6px]"><path d="M0 0h6L3 3z" /></svg></button>
        </div>
      </div>
      <fieldset className="ml-[8px] grid h-[66px] w-[335px] grid-cols-[66px_67px_66px_1fr] content-start gap-y-[1px] overflow-hidden border-l border-[#4c4c4c] pt-[3px] pl-[6px]">
        {osnaps.map(([name, on, disabled]) => (
          <Check key={name} id={`osnap-${name}`} label={name} defaultChecked={on} disabled={disabled} labelled />
        ))}
      </fieldset>
    </div>
  )
}

const statusCells: [string, string, boolean?][] = [
  ['Grid Snap', 'w-[67px]'], ['Ortho', 'w-[44px]'], ['Planar', 'w-[47px]', true], ['Osnap', 'w-[47px]', true],
  ['SmartTrack', 'w-[77px]', true], ['Gumball', 'w-[58px]', true], ['Record History', 'w-[94px]', true], ['Filter', 'w-[41px]'],
]

function StatusBar() {
  return (
    <footer className="flex h-[17px] shrink-0 overflow-hidden leading-[21px] whitespace-nowrap *:border-r *:border-[#474747]">
      <button className="w-[52px] text-center">CPlane</button>
      <span className="w-[86px] text-center">x 145.372</span>
      <span className="w-[86px] text-center">y 59.848</span>
      <span className="w-[87px] text-center">z 0.000</span>
      <button className="w-[86px] text-center">Millimeters</button>
      <button className="flex w-[166px] items-center gap-0.5 pt-[3px] pl-0.5"><span className="size-3 bg-white" />STL</button>
      {statusCells.map(([name, width, on]) => (
        <button key={name} aria-pressed={!!on} className={`${width} text-center ${on ? 'bg-[#757575] font-bold text-white' : ''}`}>{name}</button>
      ))}
      <span className="flex-1 pl-px">CPU use: 0.6 %</span>
    </footer>
  )
}

export default function App() {
  return (
    <div className="flex h-screen flex-col overflow-hidden bg-[#5b5b5b] font-['Open_Sans',sans-serif] text-[12px] leading-4 text-[#e2e2e2]">
      <TitleBar />
      <nav className="flex h-5 shrink-0 items-end border-b border-[#c8c8c8] bg-white pb-px pl-[6px] text-[#222]">
        {menus.map(([name, key, width]) => (
          <button key={name} className={`${width} text-left whitespace-nowrap`}>
            {name.slice(0, key)}<u>{name[key]}</u>{name.slice(key + 1)}
          </button>
        ))}
      </nav>
      <ToolTabs />
      <CPlaneBar />
      <div className="flex min-h-0 flex-1">
        <SideTools />
        <Viewport />
        <aside className="flex w-[429px] shrink-0 flex-col border-l border-[#444] pt-[3px] pb-[3px] pl-[7px]">
          <hr className="mb-[3px] h-[3px] shrink-0 border-y border-[#484848]" />
          <Properties />
          <Layers />
        </aside>
      </div>
      <CommandArea />
      <StatusBar />
    </div>
  )
}
